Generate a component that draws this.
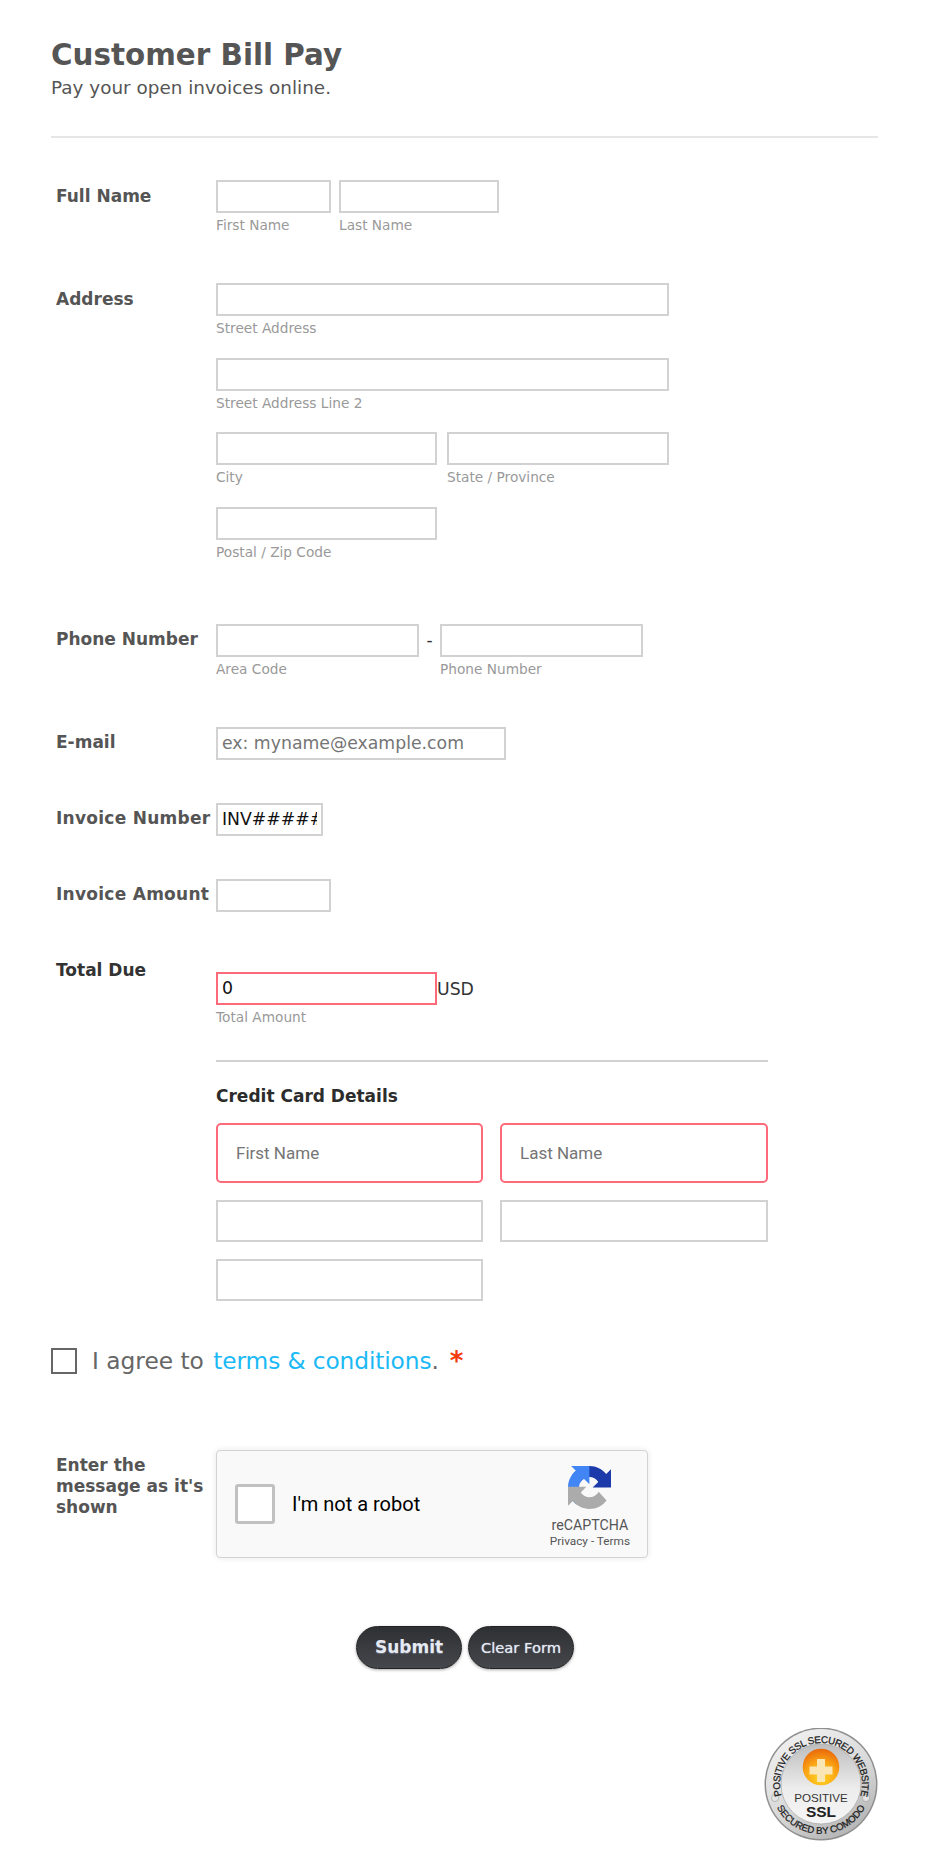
<div class="page">
  <header class="head">
    <h1>Customer Bill Pay</h1>
    <p>Pay your open invoices online.</p>
  </header>
  <hr class="rule" />

  <section class="row r-name">
    <div class="lab low">Full Name</div>
    <div class="fields inline">
      <div class="f"><input class="w115" aria-label="First Name" /><span class="sub">First Name</span></div>
      <div class="f"><input class="w160" aria-label="Last Name" /><span class="sub">Last Name</span></div>
    </div>
  </section>

  <section class="row r-address">
    <div class="lab low">Address</div>
    <div class="stack">
      <div class="f"><input class="w453" aria-label="Street Address" /><span class="sub">Street Address</span></div>
      <div class="f"><input class="w453" aria-label="Street Address Line 2" /><span class="sub">Street Address Line 2</span></div>
      <div class="fields gap10">
        <div class="f"><input class="w221" aria-label="City" /><span class="sub">City</span></div>
        <div class="f"><input class="w222" aria-label="State / Province" /><span class="sub">State / Province</span></div>
      </div>
      <div class="f"><input class="w221" aria-label="Postal / Zip Code" /><span class="sub">Postal / Zip Code</span></div>
    </div>
  </section>

  <section class="row r-phone">
    <div class="lab">Phone Number</div>
    <div class="fields">
      <div class="f"><input class="w203" aria-label="Area Code" /><span class="sub">Area Code</span></div>
      <span class="dash">-</span>
      <div class="f"><input class="w203" aria-label="Phone Number" /><span class="sub">Phone Number</span></div>
    </div>
  </section>

  <section class="row r-email">
    <div class="lab">E-mail</div>
    <input class="w290 big" placeholder="ex: myname@example.com" aria-label="E-mail" />
  </section>

  <section class="row r-inv">
    <div class="lab wide">Invoice Number</div>
    <input class="w107 big" value="INV#####" aria-label="Invoice Number" />
  </section>

  <section class="row r-amt">
    <div class="lab wide">Invoice Amount</div>
    <input class="w115" aria-label="Invoice Amount" />
  </section>

  <section class="row r-total">
    <div class="lab dark">Total Due</div>
    <div class="total">
      <div class="total-line">
        <input class="w221 big err" value="0" aria-label="Total Amount" /><span class="usd">USD</span>
      </div>
      <span class="sub">Total Amount</span>
      <div class="cc">
        <h2>Credit Card Details</h2>
        <div class="cc-grid">
          <input class="cc-in err round" placeholder="First Name" aria-label="Card first name" />
          <input class="cc-in err round" placeholder="Last Name" aria-label="Card last name" />
          <input class="cc-in short" aria-label="Card number" />
          <input class="cc-in short" aria-label="Card expiry" />
          <input class="cc-in short" aria-label="Card code" />
        </div>
      </div>
    </div>
  </section>

  <section class="agree">
    <span class="box"></span>
    <span class="agree-text">I agree to <a href="#terms">terms &amp; conditions</a>.</span>
    <span class="star">*</span>
  </section>

  <section class="row r-cap">
    <div class="lab cap-lab">Enter the message as it's shown</div>
    <div class="recap">
      <span class="recap-box"></span>
      <span class="recap-text">I'm not a robot</span>
      <div class="recap-brand">
        <svg viewBox="0 0 64 64" width="43" height="43" aria-hidden="true">
          <path d="M64 31.955l-.033-1.37V4.687l-7.16 7.16C50.948 4.674 42.033.093 32.05.093c-10.4 0-19.622 4.96-25.458 12.64l11.736 11.86a15.55 15.55 0 0 1 4.754-5.334c2.05-1.6 4.952-2.906 8.968-2.906.485 0 .86.057 1.135.163 4.976.393 9.288 3.14 11.828 7.124l-8.307 8.307 32.293.001" fill="#1c3aa9"/>
          <path d="M31.862.001l-1.37.033H4.594l7.16 7.16C4.58 13.053 0 21.968 0 31.95c0 10.4 4.96 19.622 12.64 25.458l11.86-11.736a15.55 15.55 0 0 1-5.334-4.754c-1.6-2.05-2.906-4.952-2.906-8.968 0-.485.057-.86.163-1.135.393-4.976 3.14-9.288 7.124-11.828l8.307 8.307L31.862.001" fill="#4285f4"/>
          <path d="M.001 31.95l.033 1.37v25.9l7.16-7.16c5.86 7.173 14.775 11.754 24.757 11.754 10.4 0 19.622-4.96 25.458-12.64L45.673 38.314a15.55 15.55 0 0 1-4.754 5.334c-2.05 1.6-4.952 2.906-8.968 2.906-.485 0-.86-.057-1.135-.163-4.976-.393-9.288-3.14-11.828-7.124l8.307-8.307-32.293-.001" fill="#ababab"/>
        </svg>
        <span class="brand-name">reCAPTCHA</span>
        <span class="brand-links">Privacy - Terms</span>
      </div>
    </div>
  </section>

  <div class="buttons">
    <button class="btn submit">Submit</button>
    <button class="btn clear">Clear Form</button>
  </div>

  <div class="seal-wrap">
    <svg class="seal" viewBox="0 0 114 114" width="114" height="114" role="img" aria-label="Positive SSL secured website">
      <defs>
        <linearGradient id="rimG" x1="0.2" y1="0" x2="0.8" y2="1">
          <stop offset="0" stop-color="#f1f1f1" /><stop offset="0.55" stop-color="#d8d8d8" /><stop offset="1" stop-color="#b0b0b0" />
        </linearGradient>
        <linearGradient id="innerG" x1="0" y1="0" x2="0" y2="1">
          <stop offset="0" stop-color="#bdbdbd" /><stop offset="0.55" stop-color="#ececec" /><stop offset="1" stop-color="#f6f6f6" />
        </linearGradient>
        <radialGradient id="orangeG" cx="0.5" cy="0.8" r="0.8">
          <stop offset="0" stop-color="#ffd524" /><stop offset="0.55" stop-color="#fba414" /><stop offset="1" stop-color="#e8680a" />
        </radialGradient>
        <path id="arcTop" d="M 57 97 A 41 41 0 1 1 57.01 97" />
        <path id="arcBot" d="M 57 6 A 50 50 0 1 0 57.01 6" />
      </defs>
      <circle cx="57" cy="56" r="56.5" fill="#8f8f8f" />
      <circle cx="57" cy="56" r="55" fill="url(#rimG)" />
      <circle cx="57" cy="56" r="40" fill="url(#innerG)" stroke="#a8a8a8" stroke-width="0.7" />
      <circle cx="11" cy="70" r="3.6" fill="#e4e4e4" stroke="#9a9a9a" stroke-width="0.6" />
      <circle cx="102" cy="70" r="3.6" fill="#e4e4e4" stroke="#9a9a9a" stroke-width="0.6" />
      <text class="ring"><textPath href="#arcTop" startOffset="50%" text-anchor="middle">POSITIVE SSL SECURED WEBSITE</textPath></text>
      <text class="ring low-ring"><textPath href="#arcBot" startOffset="50%" text-anchor="middle">SECURED BY COMODO</textPath></text>
      <circle cx="57" cy="39" r="18.3" fill="url(#orangeG)" />
      <path d="M53 31h8v7.5h7.5v8H61V54h-8v-7.5H45.5v-8H53z" fill="#fae6b4" />
      <text class="pos" x="57" y="74" text-anchor="middle">POSITIVE</text>
      <text class="ssl" x="57" y="89" text-anchor="middle">SSL</text>
    </svg>
  </div>
</div>

<style>
  :global(body) {
    margin: 0;
    background: #fff;
  }
  .page {
    width: 930px;
    height: 1861px;
    box-sizing: border-box;
    padding: 38px 52px 0 51px;
    font-family: "DejaVu Sans", Verdana, sans-serif;
    color: #555;
    overflow: hidden;
  }
  h1 {
    margin: 0;
    font-size: 29.4px;
    line-height: 34px;
    font-weight: 700;
    color: #555;
  }
  .head p {
    margin: 6px 0 0;
    font-size: 18.4px;
    line-height: 20px;
    color: #555;
  }
  .rule {
    margin: 38px 0 0;
    border: 0;
    height: 2px;
    background: #e6e6e6;
  }
  .row {
    display: grid;
    grid-template-columns: 160px 1fr;
    padding-left: 5px;
    align-items: start;
  }
  .lab {
    font-size: 17px;
    font-weight: 700;
    line-height: 20px;
    color: #555;
    padding-top: 5px;
    white-space: nowrap;
  }
  .lab.low {
    padding-top: 6px;
  }
  .lab.wide {
    letter-spacing: 0.27px;
  }
  .lab.dark {
    color: #333;
  }
  .fields {
    display: flex;
    align-items: flex-start;
  }
  .fields.inline {
    gap: 8px;
  }
  .fields.gap10 {
    gap: 10px;
  }
  .f {
    display: flex;
    flex-direction: column;
  }
  .stack {
    display: flex;
    flex-direction: column;
    gap: 21.5px;
  }
  input {
    display: block;
    box-sizing: border-box;
    height: 33px;
    border: 2px solid #d2d2d2;
    background: #fff;
    padding: 0 4px;
    margin: 0;
    border-radius: 0;
    outline: none;
    font-family: inherit;
    font-size: 14px;
    color: #111;
  }
  input.big {
    font-size: 17.3px;
  }
  input::placeholder {
    color: #757575;
    opacity: 1;
  }
  .w115 { width: 115px; }
  .w160 { width: 160px; }
  .w453 { width: 453px; }
  .w221 { width: 221px; }
  .w222 { width: 222px; }
  .w203 { width: 203px; }
  .w290 { width: 290px; }
  .w107 { width: 107px; }
  .sub {
    display: block;
    font-size: 13.7px;
    line-height: 16px;
    margin-top: 4px;
    color: #999;
  }
  .dash {
    width: 21px;
    text-align: center;
    font-size: 17px;
    line-height: 33px;
    color: #333;
  }
  .r-name { margin-top: 42px; }
  .r-address { margin-top: 50px; }
  .r-phone { margin-top: 64px; }
  .r-email { margin-top: 50px; }
  .r-inv { margin-top: 43px; }
  .r-amt { margin-top: 43px; }
  .r-total { margin-top: 44px; }
  .r-total .lab { padding-top: 4px; }
  .total {
    padding-top: 16px;
  }
  .total-line {
    display: flex;
    align-items: center;
  }
  input.err {
    border: 2px solid #fd6a7a;
  }
  .usd {
    font-size: 17.3px;
    line-height: 22px;
    padding-top: 1px;
    color: #333;
  }
  .cc {
    width: 552px;
    margin-top: 35px;
    border-top: 2px solid #d2d2d2;
  }
  h2 {
    margin: 24px 0 0;
    font-size: 17px;
    line-height: 20px;
    font-weight: 700;
    color: #2c2c2c;
  }
  .cc-grid {
    display: grid;
    grid-template-columns: 267px 268px;
    column-gap: 17px;
    row-gap: 17px;
    margin-top: 17px;
  }
  .cc-in {
    width: 100%;
    height: 60px;
    font-family: Roboto, sans-serif;
    font-size: 17px;
    padding: 0 18px;
  }
  .cc-in.short {
    height: 42px;
  }
  .cc-in.round {
    border-radius: 5px;
  }
  .agree {
    display: flex;
    align-items: center;
    margin-top: 47px;
    height: 26px;
  }
  .box {
    width: 26px;
    height: 26px;
    box-sizing: border-box;
    border: 2px solid #666;
    background: #fff;
  }
  .agree-text {
    margin-left: 15px;
    font-size: 23.3px;
    color: #666;
  }
  .agree-text a {
    color: #1bb9f5;
    text-decoration: none;
    margin-left: 2px;
    letter-spacing: -0.12px;
  }
  .star {
    margin-left: 11px;
    font-size: 26px;
    font-weight: 700;
    color: #f23a0c;
  }
  .r-cap {
    margin-top: 76px;
  }
  .cap-lab {
    white-space: normal;
    width: 150px;
    line-height: 21px;
    padding-top: 5px;
  }
  .recap {
    width: 432px;
    height: 108px;
    box-sizing: border-box;
    border: 1px solid #d3d3d3;
    border-radius: 4px;
    background: #f9f9f9;
    box-shadow: 0 0 6px rgba(0, 0, 0, 0.09);
    display: flex;
    align-items: center;
    padding: 0 17px 0 18px;
    font-family: Roboto, sans-serif;
  }
  .recap-box {
    width: 40px;
    height: 40px;
    box-sizing: border-box;
    border: 3px solid #c1c1c1;
    border-radius: 3px;
    background: #fff;
  }
  .recap-text {
    margin-left: 17px;
    font-size: 20px;
    color: #000;
    flex: 1;
  }
  .recap-brand {
    display: flex;
    flex-direction: column;
    align-items: center;
    color: #555;
    padding-top: 7px;
  }
  .brand-name {
    font-size: 14.2px;
    line-height: 16px;
    margin-top: 8px;
  }
  .brand-links {
    font-size: 11.8px;
    line-height: 14px;
    margin-top: 1px;
  }
  .buttons {
    display: flex;
    justify-content: center;
    gap: 6px;
    margin-top: 68px;
    padding-left: 1px;
  }
  .btn {
    width: 106px;
    height: 43px;
    box-sizing: border-box;
    border: 1px solid #222;
    border-radius: 22px;
    background: linear-gradient(#2f3033, #45474c);
    box-shadow: 0 1px 3px rgba(0, 0, 0, 0.35);
    font-family: "DejaVu Sans", sans-serif;
    color: #e6eaf2;
    padding: 0;
    font-weight: 400;
  }
  .submit {
    font-size: 17px;
    font-weight: 700;
    text-shadow: 0 1px 1px #6a7080;
  }
  .clear {
    font-size: 14.7px;
    text-shadow: 0 0 1px #c5cfe4;
  }
  .seal-wrap {
    display: flex;
    justify-content: flex-end;
    margin-top: 59px;
  }
  .ring {
    font-family: "Liberation Sans", sans-serif;
    font-size: 9.8px;
    letter-spacing: -0.42px;
    fill: #1a1a1a;
    stroke: #1a1a1a;
    stroke-width: 0.25;
  }
  .low-ring {
    font-size: 9.6px;
    letter-spacing: -0.1px;
  }
  .pos {
    font-family: "Liberation Sans", sans-serif;
    font-size: 11.6px;
    fill: #333;
  }
  .ssl {
    font-family: "Liberation Sans", sans-serif;
    font-size: 15.5px;
    font-weight: 700;
    fill: #222;
  }
</style>
